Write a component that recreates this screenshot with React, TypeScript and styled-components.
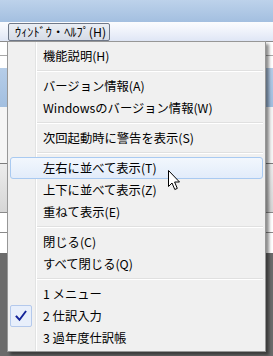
import React from "react";
import styled, { createGlobalStyle } from "styled-components";

const Global = createGlobalStyle`
  html, body { margin: 0; padding: 0; }
  body {
    width: 273px;
    height: 356px;
    overflow: hidden;
    font-family: "Noto Sans CJK JP", "Noto Sans", sans-serif;
  }
`;

const Screen = styled.div`
  position: relative;
  width: 273px;
  height: 356px;
  overflow: hidden;
  display: flex;
  flex-direction: column;
  background: #6b6b6b;
`;

const TitleBand = styled.div`
  flex: none;
  height: 22px;
  background: linear-gradient(#bdd2eb, #a3bfe0);
`;

const MenuBar = styled.div`
  flex: none;
  height: 19px;
  box-sizing: border-box;
  display: flex;
  align-items: flex-start;
  padding: 1px 0 0 8px;
  background: linear-gradient(#fbfcfe 0%, #f1f4fb 40%, #dfe6f5 100%);
`;

const MenuTitle = styled.div`
  height: 18px;
  width: 102px;
  box-sizing: border-box;
  border: 1px solid #6f7888;
  border-radius: 2px;
  background: linear-gradient(#eaeef4, #d5dbe6);
  font-size: 12.3px;
  line-height: 16px;
  padding-left: 6px;
  color: #000;
  white-space: nowrap;
`;

const Band = styled.div<{ $h?: number; $bg: string; $line?: string }>`
  flex: ${(p) => (p.$h ? "none" : "1")};
  height: ${(p) => (p.$h ? `${p.$h}px` : "auto")};
  box-sizing: border-box;
  background: ${(p) => p.$bg};
  border-top: ${(p) => (p.$line ? `1px solid ${p.$line}` : "none")};
`;

const Dropdown = styled.div`
  position: absolute;
  top: 41px;
  left: 7px;
  width: 259px;
  box-sizing: border-box;
  border: 1px solid #979797;
  padding: 3px 2px 2px 2px;
  background:
    linear-gradient(
      to right,
      transparent 27px,
      #e2e3e3 27px,
      #e2e3e3 28px,
      #ffffff 28px,
      #ffffff 29px,
      transparent 29px
    ),
    #f0f0f0;
  box-shadow: 3px 3px 3px rgba(0, 0, 0, 0.45);
  display: flex;
  flex-direction: column;
`;

const Item = styled.div<{ $active?: boolean }>`
  height: 22px;
  box-sizing: border-box;
  display: flex;
  align-items: center;
  border: 1px solid ${(p) => (p.$active ? "#a9caf1" : "transparent")};
  border-radius: 3px;
  background: ${(p) =>
    p.$active ? "linear-gradient(#f2f7fd, #e2ecfa)" : "transparent"};
  font-size: 12.3px;
  line-height: 20px;
  color: #000;
  white-space: nowrap;
`;

const CheckSlot = styled.div<{ $checked?: boolean }>`
  flex: none;
  width: 22px;
  height: 22px;
  margin: -1px 0 -1px -1px;
  box-sizing: border-box;
  display: flex;
  align-items: center;
  justify-content: center;
  border: 1px solid ${(p) => (p.$checked ? "#b4c9ec" : "transparent")};
  border-radius: 2px;
  background: ${(p) => (p.$checked ? "#e8effb" : "transparent")};
`;

const Label = styled.span`
  padding-left: 11px;
`;

const Sep = styled.div`
  height: 8px;
  box-sizing: border-box;
  padding: 3px 0 0 27px;
`;

const SepLine = styled.div`
  height: 0;
  border-top: 1px solid #e0e0e0;
  border-bottom: 1px solid #ffffff;
`;

const Cursor = styled.svg`
  position: absolute;
  left: 167px;
  top: 169px;
`;

type Entry =
  | { kind: "item"; label: string; active?: boolean; checked?: boolean }
  | { kind: "sep" };

const entries: Entry[] = [
  { kind: "item", label: "機能説明(H)" },
  { kind: "sep" },
  { kind: "item", label: "バージョン情報(A)" },
  { kind: "item", label: "Windowsのバージョン情報(W)" },
  { kind: "sep" },
  { kind: "item", label: "次回起動時に警告を表示(S)" },
  { kind: "sep" },
  { kind: "item", label: "左右に並べて表示(T)", active: true },
  { kind: "item", label: "上下に並べて表示(Z)" },
  { kind: "item", label: "重ねて表示(E)" },
  { kind: "sep" },
  { kind: "item", label: "閉じる(C)" },
  { kind: "item", label: "すべて閉じる(Q)" },
  { kind: "sep" },
  { kind: "item", label: "1 メニュー" },
  { kind: "item", label: "2 仕訳入力", checked: true },
  { kind: "item", label: "3 過年度仕訳帳" },
];

const CheckMark = () => (
  <svg width="12" height="12" viewBox="0 0 12 12">
    <path
      d="M1.5 6.5 L4.5 9.8 L10.5 1.8"
      fill="none"
      stroke="#14249a"
      strokeWidth="1.9"
      strokeLinecap="square"
      strokeLinejoin="miter"
    />
  </svg>
);

export default function App() {
  return (
    <>
      <Global />
      <Screen>
        <TitleBand />
        <MenuBar>
          <MenuTitle>ｳｨﾝﾄﾞｳ・ﾍﾙﾌﾟ(H)</MenuTitle>
        </MenuBar>
        <Band $h={14} $bg="#ffffff" $line="#8c8c8c" />
        <Band $h={13} $bg="#ffffff" $line="#a8a8a8" />
        <Band $h={39} $bg="linear-gradient(#b6cde8, #a2bfe0)" />
        <Band $h={56} $bg="#f5f5f5" />
        <Band $h={49} $bg="linear-gradient(#ececec, #d6d6d6)" $line="#7c7c7c" />
        <Band $h={20} $bg="#ffffff" $line="#8a8a8a" />
        <Band $h={21} $bg="#ffffff" $line="#8a8a8a" />
        <Band $bg="#6b6b6b" />

        <Dropdown>
          {entries.map((e, i) =>
            e.kind === "sep" ? (
              <Sep key={i}>
                <SepLine />
              </Sep>
            ) : (
              <Item key={i} $active={e.active}>
                <CheckSlot $checked={e.checked}>
                  {e.checked ? <CheckMark /> : null}
                </CheckSlot>
                <Label>{e.label}</Label>
              </Item>
            )
          )}
        </Dropdown>

        <Cursor width="14" height="22" viewBox="0 0 14 22">
          <path
            d="M1.5 1.5 L1.5 17.5 L5 14 L7.8 20.5 L10.3 19.4 L7.6 13 L12.5 13 Z"
            fill="#ffffff"
            stroke="#000000"
            strokeWidth="1"
            strokeLinejoin="miter"
          />
        </Cursor>
      </Screen>
    </>
  );
}
